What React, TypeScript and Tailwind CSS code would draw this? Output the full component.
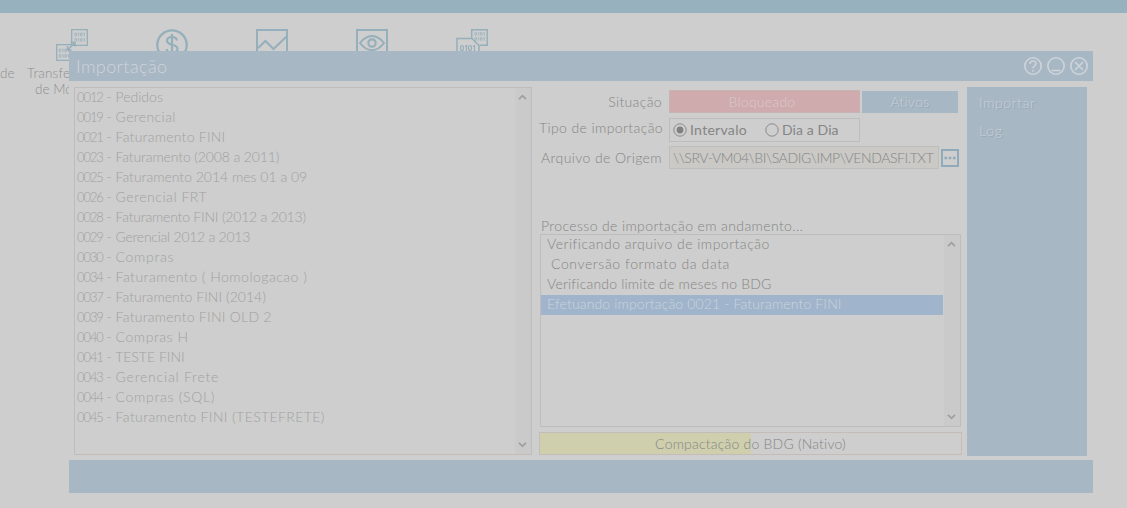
import React from "react";

const imports: [string, string, string][] = [
  ["0012", "Pedidos", "tracking-[0px]"],
  ["0019", "Gerencial", "tracking-[0.4px]"],
  ["0021", "Faturamento FINI", "tracking-[0.25px]"],
  ["0023", "Faturamento (2008 a 2011)", "tracking-[-0.12px]"],
  ["0025", "Faturamento 2014 mes 01 a 09", "tracking-[0px]"],
  ["0026", "Gerencial FRT", "tracking-[0.54px]"],
  ["0028", "Faturamento FINI (2012 a 2013)", "tracking-[-0.2px]"],
  ["0029", "Gerencial 2012 a 2013", "tracking-[-0.25px]"],
  ["0030", "Compras", "tracking-[0.7px]"],
  ["0034", "Faturamento ( Homologacao )", "tracking-[0.5px]"],
  ["0037", "Faturamento FINI (2014)", "tracking-[0.04px]"],
  ["0039", "Faturamento FINI OLD 2", "tracking-[0.26px]"],
  ["0040", "Compras H", "tracking-[0.55px]"],
  ["0041", "TESTE FINI", "tracking-[0px]"],
  ["0043", "Gerencial Frete", "tracking-[0.8px]"],
  ["0044", "Compras (SQL)", "tracking-[0.7px]"],
  ["0045", "Faturamento FINI (TESTEFRETE)", "tracking-[0.4px]"],
];

function Chevron({ down = false }: { down?: boolean }) {
  return (
    <svg className="mr-[2px]" width="9" height="6" viewBox="0 0 9 6" fill="none" stroke="#9f9f9f" strokeWidth="1.7">
      <path d={down ? "M1 .8 4.5 4.3 8 .8" : "M1 5.2 4.5 1.7 8 5.2"} />
    </svg>
  );
}

function Scrollbar() {
  return (
    <div className="flex w-4 shrink-0 flex-col items-center justify-between bg-[#cacaca] py-[6px]">
      <Chevron />
      <Chevron down />
    </div>
  );
}

// A "0101" row of binary digits, 10 units wide.
function Bits({ x, y }: { x: number; y: number }) {
  return (
    <g transform={`translate(${x} ${y})`} strokeWidth=".8">
      <rect x=".4" y=".4" width="1.600" height="3" rx=".7" />
      <path d="M3.300.9 4.200.4V3.700M8.900.9 9.800.4V3.700" />
      <rect x="6" y=".4" width="1.600" height="3" rx=".7" />
    </g>
  );
}

function Toolbar() {
  return (
    <div className="flex h-[90px] pt-4 text-[13.5px] leading-4 text-[#8e8e8e]">
      <div className="w-[22px] shrink-0 pt-[36px]">de</div>
      <div className="w-[100px] shrink-0 whitespace-nowrap">
        <svg className="ml-[34px] block" width="32" height="36" viewBox="0 0 32 36" fill="none" stroke="#95afbb">
          <path strokeWidth="1.3" d="M15.700.7h15.600v15.600H15.700zM15 15.700H.7v15.600h14" />
          <path strokeWidth="1.500" d="M11.500 21l7-7M14.500 13.500h4.500v4M11.500 17v4h4" />
          <Bits x={18.500} y={3.500} />
          <Bits x={18.500} y={9} />
          <Bits x={2.800} y={19.500} />
          <Bits x={2.800} y={25} />
        </svg>
        <div className="ml-[5px] w-[42px] overflow-hidden tracking-[0.2px]">Transfe</div>
        <div className="ml-[13px] w-[34px] overflow-hidden tracking-[0px]">de Mó</div>
      </div>
      <div className="flex w-[100px] shrink-0 justify-center">
        <svg width="32" height="32" viewBox="0 0 32 32" fill="none" stroke="#95afbb">
          <circle cx="16" cy="16" r="14.700" strokeWidth="2.300" />
          <path strokeWidth="2.200" d="M21 11.500C20.500 9 18.500 8 16 8c-3 0-5 1.400-5 3.800 0 5.400 10.500 2.600 10.500 8 0 2.500-2.200 4-5.500 4-3 0-5-1.200-5.400-3.800M16 5v22" />
        </svg>
      </div>
      <div className="flex w-[100px] shrink-0 justify-center">
        <svg width="32" height="32" viewBox="0 0 32 32" fill="none" stroke="#95afbb" strokeWidth="2">
          <path d="M1 1h30v30H1zM2 19l7.500-7 8 8L31 7" />
        </svg>
      </div>
      <div className="flex w-[100px] shrink-0 justify-center">
        <svg width="32" height="32" viewBox="0 0 32 32" fill="none" stroke="#95afbb" strokeWidth="2">
          <path d="M1 1h30v30H1zM4 14C11 4.500 21 4.500 28 14 21 23.500 11 23.500 4 14z" />
          <circle cx="16" cy="14" r="3.700" strokeWidth="2.200" />
        </svg>
      </div>
      <div className="flex w-[100px] shrink-0 justify-center">
        <svg width="32" height="32" viewBox="0 0 32 32" fill="none" stroke="#95afbb" strokeWidth="1.500">
          <path d="M15.700 9V.7h15.600v15.600h-7.500M1 30V9.500h15l7 7V30z" />
          <Bits x={18.500} y={3} />
          <Bits x={18.500} y={8} />
          <g strokeWidth="1.200">
            <ellipse cx="6" cy="19" rx="1.500" ry="2.500" />
            <path d="M9 17.500l1.500-1v5.500M17 17.500l1.500-1v5.500" />
            <ellipse cx="14" cy="19" rx="1.500" ry="2.500" />
          </g>
        </svg>
      </div>
    </div>
  );
}

function TitleBar() {
  return (
    <header className="flex h-[30px] shrink-0 items-center justify-between bg-[#a8b7c4] pl-[7px] pr-1">
      <h1 className="text-[18px] leading-[30px] tracking-[0.4px] text-[#ced4da]">Importação</h1>
      <svg width="66" height="20" viewBox="0 0 66 20" fill="none" stroke="#ced4da" strokeWidth="1.600">
        <circle cx="10" cy="10" r="8.200" />
        <circle cx="33" cy="10" r="8.200" />
        <circle cx="56" cy="10" r="8.200" />
        <path d="M7 8c0-4 6-4 6-.5 0 2.500-3 2.200-3 5M10 14v1.800M28.500 14.500h9M52 6l8 8M60 6l-8 8" />
      </svg>
    </header>
  );
}

export default function App() {
  return (
    <div className="relative h-[508px] w-[1127px] overflow-hidden bg-[#cecece] font-['Lato','Open_Sans',sans-serif] font-light">
      <div className="h-[13px] bg-[#98b1be]" />
      <Toolbar />

      <section className="absolute left-[69px] top-[51px] flex h-[442px] w-[1024px] flex-col bg-[#cecece] text-[14px]">
        <TitleBar />
        <div className="flex h-[379px] shrink-0 items-start pl-[5px] pt-[6px]">
          <div className="flex h-[368px] w-[458px] shrink-0 border border-[#bdbdbd] border-b-[#c3bcb8]">
            <ul className="flex-1 whitespace-pre pl-[2px] leading-[18px] text-[#a1a1a1]">
              {imports.map(([code, name, tracking]) => (
                <li key={code} className="h-5">
                  <span className="text-[13px] tracking-[-1.1px]">{code}</span>
                  <span> - </span>
                  <span className={tracking}>{name}</span>
                </li>
              ))}
            </ul>
            <Scrollbar />
          </div>

          <div className="ml-[7px] flex h-[369px] w-[423px] shrink-0 flex-col text-[#858585]">
            <div className="mt-[3px] flex h-[23px] items-center">
              <div className="w-[123px] whitespace-nowrap pb-px text-right tracking-[0.35px]">Situação</div>
              <div className="ml-[7px] flex h-[23px] w-[191px] items-center justify-center border border-[#c6b3b4] bg-[#cfabad] pr-[5px] tracking-[0.25px] text-[#dbc9ca]">Bloqueado</div>
              <div className="ml-[2px] flex h-[22px] w-[96px] items-center justify-center bg-[#a8b7c4] pb-px tracking-[0.3px] text-[#c8d1d9] [text-shadow:1px_1px_0_#94a6b3]">Ativos</div>
            </div>
            <div className="mt-[5px] flex h-6 items-center">
              <div className="w-[123px] whitespace-nowrap pb-[5px] text-right tracking-[0.39px]">Tipo de importação</div>
              <div className="ml-[7px] flex h-6 w-[191px] items-center border border-[#bdbdbd] pl-[3px] font-normal">
                <svg width="14" height="14" viewBox="0 0 14 14" fill="none" stroke="#898989">
                  <circle cx="7" cy="7" r="6.200" />
                  <circle cx="7" cy="7" r="3.400" fill="#808080" stroke="none" />
                </svg>
                <span className="ml-[3px] w-[75px] pb-px tracking-[0.3px]">Intervalo</span>
                <svg width="14" height="14" viewBox="0 0 14 14" fill="none" stroke="#898989">
                  <circle cx="7" cy="7" r="6.200" />
                </svg>
                <span className="ml-[3px] whitespace-nowrap pb-px tracking-[0.1px]">Dia a Dia</span>
              </div>
            </div>
            <div className="mt-[4px] flex h-[23px] items-center">
              <div className="w-[123px] whitespace-nowrap pb-px text-right tracking-[0.4px]">Arquivo de Origem</div>
              <div className="ml-[7px] flex h-[23px] w-[270px] items-center whitespace-nowrap border border-[#bebebb] bg-[#cac9c5] pl-[3px] tracking-[-0.4px]">{"\\\\SRV-VM04\\BI\\SADIG\\IMP\\VENDASFI.TXT"}</div>
              <svg className="ml-[2px]" width="18" height="18" viewBox="0 0 18 18" fill="none" stroke="#91aaba" strokeWidth="2">
                <path d="M1 1h16v16H1z" />
                <path strokeWidth="2.600" strokeDasharray="2.600 1.600" d="M3.500 9h11" />
              </svg>
            </div>

            <div className="mt-[48px] h-[17px] pl-[2px] leading-[17px] tracking-[0.38px]">Processo de importação em andamento...</div>
            <div className="ml-px flex h-[193px] w-[421px] shrink-0 border border-[#bdbdbd]">
              <div className="flex-1 whitespace-pre leading-[18px]">
                <div className="h-5 pl-[6px] tracking-[0.49px]">Verificando arquivo de importação</div>
                <div className="h-5 pl-[10px] tracking-[0.6px]">Conversão formato da data</div>
                <div className="h-5 pl-[6px] tracking-[0.2px]">Verificando limite de meses no BDG</div>
                <div className="mr-px h-5 bg-[#a0b4cb] pl-[6px] tracking-[0.14px] text-[#cbd4dd]">Efetuando importação 0021 - Faturamento FINI</div>
              </div>
              <Scrollbar />
            </div>
            <div className="mt-[5px] grid h-[23px] w-[423px] shrink-0 grid-cols-1 grid-rows-1 border border-[#c3bcb8]">
              <div className="col-start-1 row-start-1 w-1/2 bg-[#cfcfae]" />
              <div className="col-start-1 row-start-1 text-center leading-[22px] tracking-[0.2px]">Compactação do BDG (Nativo)</div>
            </div>
          </div>

          <nav className="ml-[5px] h-[369px] w-[120px] shrink-0 bg-[#a8b7c4] pl-3 pt-[2px] leading-7 text-[#c8d1d9] [text-shadow:1px_1px_0_#94a6b3]">
            <div className="tracking-[0.6px]">Importar</div>
            <div className="tracking-[0.8px]">Log</div>
          </nav>
        </div>
        <footer className="h-[33px] shrink-0 bg-[#a8b7c4]" />
      </section>
    </div>
  );
}
